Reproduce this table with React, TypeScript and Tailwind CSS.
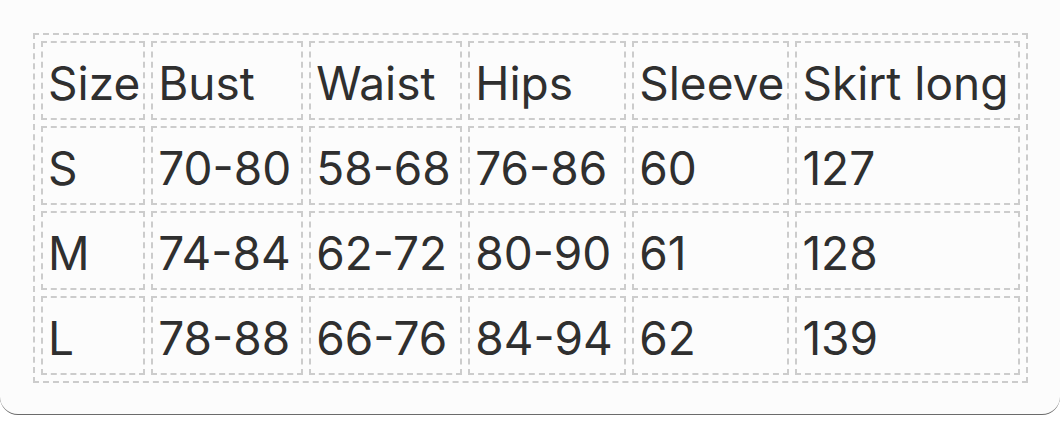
import React from "react";

const header = ["Size", "Bust", "Waist", "Hips", "Sleeve", "Skirt long"];
const rows = [
  ["S", "70-80", "58-68", "76-86", "60", "127"],
  ["M", "74-84", "62-72", "80-90", "61", "128"],
  ["L", "78-88", "66-76", "84-94", "62", "139"],
];
const widths = ["w-[104px]", "w-[152px]", "w-[153px]", "w-[158px]", "w-[157px]", "w-[225px]"];

export default function App() {
  return (
    <div className="w-[1060px] h-[441px] bg-white" style={{ fontFamily: "Inter, 'Noto Sans', sans-serif" }}>
      <div className="w-[1060px] h-[415px] bg-[#fcfcfc] border-b border-[#6b6b6b] rounded-b-[18px] pt-[33px] pl-[33px]">
        <table className="border-separate border-spacing-[6px] border-2 border-dashed border-[#cccccc] text-[#2f2f2f]">
          <tbody>
            {[header, ...rows].map((r, i) => (
              <tr key={i}>
                {r.map((c, j) => (
                  <td
                    key={j}
                    className={`${widths[j]} h-[79px] box-border border-2 border-dashed border-[#cccccc] pl-[5px] pr-[3px] pt-[4px] text-left align-middle text-[46px] leading-none`}
                  >
                    {c}
                  </td>
                ))}
              </tr>
            ))}
          </tbody>
        </table>
      </div>
    </div>
  );
}
